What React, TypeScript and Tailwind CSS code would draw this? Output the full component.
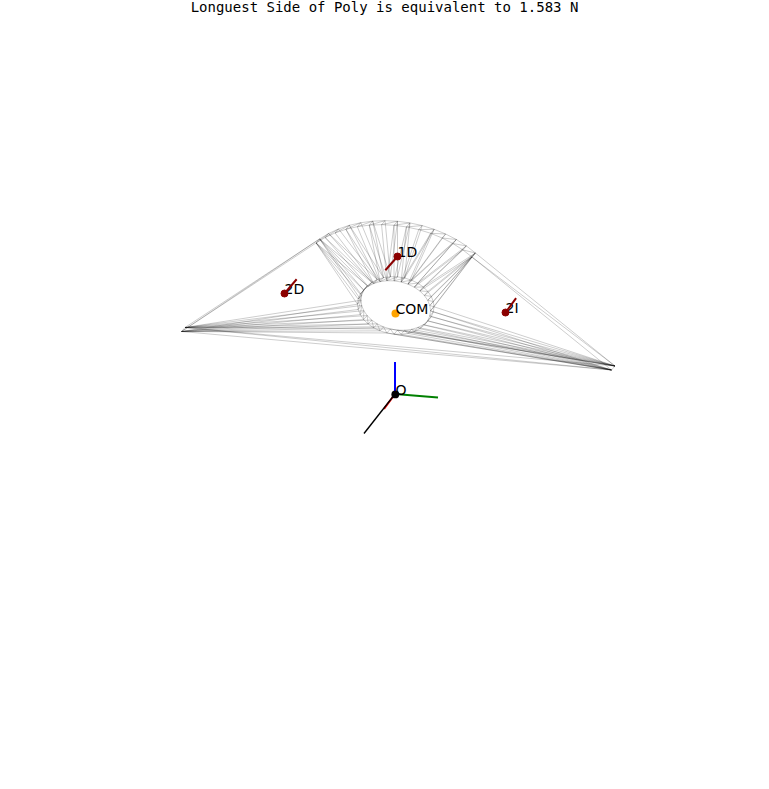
type Point = [number, number];
type Edge = [Point, Point];

const DEPTH: Point = [3.5, -4];
const CENTER: Point = [394, 303];
const HOLE: Point = [394, 307.5];
const SLOPE = 0.09;
const RISE = 0.73;
const ARC_STEPS = 14;
const RING_STEPS = 32;

const polar = (c: Point, r: number, deg: number): Point => {
  const a = (deg * Math.PI) / 180;
  const x = r * Math.cos(a);
  return [c[0] + x, c[1] + x * SLOPE - r * RISE * Math.sin(a)];
};

const back = (p: Point): Point => [p[0] + DEPTH[0], p[1] + DEPTH[1]];

const left: Point = [181.5, 331.5];
const right: Point = [611.5, 370];

const arcAngles = Array.from({ length: ARC_STEPS + 1 }, (_, i) => 137 - (i * 94) / ARC_STEPS);
const arc = arcAngles.map((a) => polar(CENTER, 106.5, a));
const ringAngles = Array.from({ length: RING_STEPS }, (_, i) => 180 - (i * 360) / RING_STEPS);
const ring = ringAngles.map((a) => polar(HOLE, 36.5, a));

function buildFace(): Edge[] {
  const edges: Edge[] = [];
  // The arc is joined to the upper half of the hole.
  let i = 0;
  let j = 0;
  const top = RING_STEPS / 2;
  edges.push([arc[0], ring[0]]);
  while (i < ARC_STEPS || j < top) {
    if (j >= top || (i < ARC_STEPS && arcAngles[i + 1] >= ringAngles[j + 1])) i++;
    else j++;
    edges.push([arc[i], ring[j]]);
  }
  // The two tips are joined to its lower half.
  for (let k = top; k <= RING_STEPS; k++) {
    const node = ring[k % RING_STEPS];
    if (k <= 25) edges.push([right, node]);
    if (k >= 25) edges.push([left, node]);
  }
  return edges;
}

function buildWalls(outline: Point[]): Edge[] {
  return outline.flatMap((p, i): Edge[] => {
    const q = outline[(i + 1) % outline.length];
    return [
      [p, back(p)],
      [p, q],
      [back(p), back(q)],
      [p, back(q)],
    ];
  });
}

const face = buildFace();
const mesh: Edge[] = [
  ...face,
  ...face.map(([a, b]): Edge => [back(a), back(b)]),
  ...buildWalls([left, ...arc, right]),
  ...buildWalls(ring),
];

const forces = [
  { name: "1D", x: 397.5, y: 256.5, tx: 386, ty: 269.5 },
  { name: "2D", x: 284.5, y: 293.5, tx: 296, ty: 280 },
  { name: "2I", x: 505.5, y: 312.5, tx: 515.5, ty: 299 },
];

export default function App() {
  return (
    <main className="min-h-screen bg-white text-black">
      <h1 className="h-5 text-center font-['DejaVu_Sans_Mono',monospace] text-[14px] leading-[14px] whitespace-nowrap">
        Longuest Side of Poly is equivalent to 1.583 N
      </h1>
      <svg
        viewBox="0 20 769 769"
        className="block w-full font-['DejaVu_Sans',sans-serif] text-[14px]"
        role="img"
        aria-label="Force diagram"
      >
        <g stroke="#000" strokeWidth="0.2" fill="none">
          {mesh.map(([a, b], i) => (
            <line key={i} x1={a[0]} y1={a[1]} x2={b[0]} y2={b[1]} />
          ))}
        </g>
        <g fill="#000">
          {forces.map((f) => (
            <text key={f.name} x={f.x} y={f.y + 0.5}>
              {f.name}
            </text>
          ))}
        </g>
        <g stroke="#8b0000" fill="#8b0000" strokeWidth="2">
          {forces.map((f) => (
            <g key={f.name}>
              <line x1={f.x} y1={f.y} x2={f.tx} y2={f.ty} strokeLinecap="square" />
              <circle cx={f.x} cy={f.y} r="3.5" strokeWidth="1" />
            </g>
          ))}
        </g>
        <circle cx="395.5" cy="313.5" r="4" fill="#ffa500" />
        <text x="395.5" y="313.5">COM</text>
        <g strokeWidth="2">
          <line x1="395" y1="394" x2="384" y2="409" stroke="#f00" />
          <line x1="395" y1="394" x2="438" y2="397.5" stroke="#008000" />
          <line x1="395" y1="394" x2="395" y2="362" stroke="#00f" />
        </g>
        <line x1="395" y1="394" x2="364" y2="433.5" stroke="#000" strokeWidth="1.4" />
        <circle cx="395.3" cy="394.4" r="3.9" fill="#000" />
        <text x="395.5" y="395">O</text>
      </svg>
    </main>
  );
}
